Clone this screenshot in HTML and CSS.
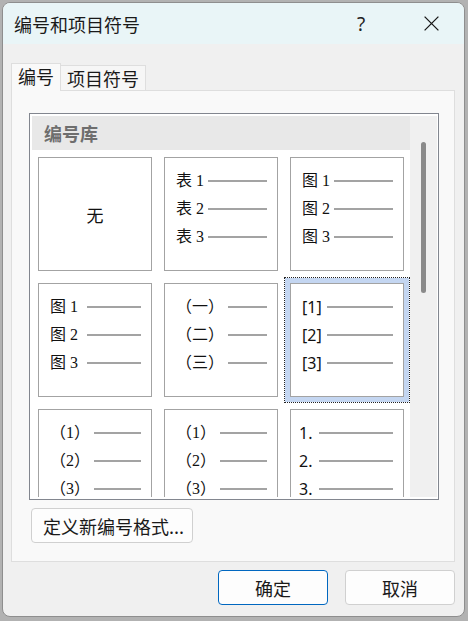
FILE: index.html
```html
<!DOCTYPE html>
<html lang="zh-CN">
<head>
<meta charset="utf-8">
<title>编号和项目符号</title>
<link rel="stylesheet" href="styles.css">
</head>
<body>
<div class="window">
  <div class="titlebar">
    <span class="title">编号和项目符号</span>
    <span class="help">?</span>
    <span class="close">
      <svg width="15" height="15" viewBox="0 0 15 15"><path d="M0.6 0.6 L14.4 14.4 M14.4 0.6 L0.6 14.4" stroke="#1b1b1b" stroke-width="1.3" fill="none"/></svg>
    </span>
  </div>
  <div class="body">
    <div class="tabs">
      <div class="tab active">编号</div>
      <div class="tab">项目符号</div>
    </div>
    <div class="panel">
      <div class="list">
        <div class="main">
          <div class="lib-head">编号库</div>
          <div class="grid">
            <div class="cell none"><span>无</span></div>
            <div class="cell">
              <div class="ln"><span class="t">表 1</span><span class="rule"></span></div>
              <div class="ln"><span class="t">表 2</span><span class="rule"></span></div>
              <div class="ln"><span class="t">表 3</span><span class="rule"></span></div>
            </div>
            <div class="cell">
              <div class="ln"><span class="t">图 1</span><span class="rule"></span></div>
              <div class="ln"><span class="t">图 2</span><span class="rule"></span></div>
              <div class="ln"><span class="t">图 3</span><span class="rule"></span></div>
            </div>
            <div class="cell wide">
              <div class="ln"><span class="t">图 1</span><span class="rule"></span></div>
              <div class="ln"><span class="t">图 2</span><span class="rule"></span></div>
              <div class="ln"><span class="t">图 3</span><span class="rule"></span></div>
            </div>
            <div class="cell">
              <div class="ln"><span class="t">（一）</span><span class="rule"></span></div>
              <div class="ln"><span class="t">（二）</span><span class="rule"></span></div>
              <div class="ln"><span class="t">（三）</span><span class="rule"></span></div>
            </div>
            <div class="cell selected sans">
              <div class="ln"><span class="t">[1]</span><span class="rule"></span></div>
              <div class="ln"><span class="t">[2]</span><span class="rule"></span></div>
              <div class="ln"><span class="t">[3]</span><span class="rule"></span></div>
            </div>
            <div class="cell paren">
              <div class="ln"><span class="t">（1）</span><span class="rule"></span></div>
              <div class="ln"><span class="t">（2）</span><span class="rule"></span></div>
              <div class="ln"><span class="t">（3）</span><span class="rule"></span></div>
            </div>
            <div class="cell paren">
              <div class="ln"><span class="t">（1）</span><span class="rule"></span></div>
              <div class="ln"><span class="t">（2）</span><span class="rule"></span></div>
              <div class="ln"><span class="t">（3）</span><span class="rule"></span></div>
            </div>
            <div class="cell sans dot">
              <div class="ln"><span class="t">1.</span><span class="rule"></span></div>
              <div class="ln"><span class="t">2.</span><span class="rule"></span></div>
              <div class="ln"><span class="t">3.</span><span class="rule"></span></div>
            </div>
          </div>
        </div>
        <div class="track"><div class="thumb"></div></div>
      </div>
      <button class="btn define">定义新编号格式...</button>
    </div>
    <div class="actions">
      <button class="btn primary">确定</button>
      <button class="btn">取消</button>
    </div>
  </div>
</div>
</body>
</html>
```

FILE: styles.css
```css
* { box-sizing: border-box; }

html, body {
  margin: 0;
  padding: 0;
}

body {
  width: 468px;
  height: 621px;
  overflow: hidden;
  background: #b2b2b2;
  font-family: "Noto Sans CJK SC", "Noto Sans", sans-serif;
  color: #1a1a1a;
}

.window {
  margin: 2px 3px 4px 2px;
  height: 615px;
  border: 1px solid #8e8e8e;
  border-radius: 8px;
  overflow: hidden;
  background: #f0f0f0;
  display: flex;
  flex-direction: column;
}

.titlebar {
  height: 41px;
  flex: none;
  background: #e9f5f7;
  display: flex;
  align-items: center;
  padding-left: 11px;
  padding-right: 18px;
}

.title {
  font-size: 18px;
  line-height: 20px;
}

.help {
  margin-left: auto;
  width: 30px;
  text-align: center;
  font-family: "Noto Sans", sans-serif;
  font-size: 19px;
  line-height: 20px;
  color: #222;
}

.close {
  margin-left: 40px;
  width: 30px;
  height: 16px;
  display: flex;
  justify-content: center;
  align-items: center;
}

.body {
  flex: 1;
  padding: 19px 9px 0 8px;
  display: flex;
  flex-direction: column;
}

.tabs {
  height: 27px;
  display: flex;
  align-items: flex-end;
}

.tab {
  height: 25px;
  padding: 0 6px;
  font-size: 18px;
  line-height: 22px;
  background: #f6f6f6;
  border: 1px solid #dedede;
  border-bottom: none;
  border-left: none;
  display: flex;
  align-items: center;
}

.tab.active {
  height: 28px;
  margin-bottom: -1px;
  background: #f9f9f9;
  border-left: 1px solid #dedede;
  position: relative;
  z-index: 1;
  padding-bottom: 3px;
}

.panel {
  height: 472px;
  background: #f9f9f9;
  border: 1px solid #dedede;
  padding: 22px 0 0 17px;
  display: flex;
  flex-direction: column;
  align-items: flex-start;
}

.list {
  width: 410px;
  height: 387px;
  border: 1px solid #82868f;
  background: #fff;
  padding: 2px 1px 2px 2px;
  display: flex;
}

.main {
  width: 378px;
  display: flex;
  flex-direction: column;
}

.lib-head {
  height: 34px;
  flex: none;
  background: #e8e8e8;
  padding-left: 12px;
  font-size: 18px;
  font-weight: 700;
  color: #6e6e6e;
  line-height: 34px;
}

.grid {
  flex: 1;
  overflow: hidden;
  padding: 7px 0 0 6px;
  display: grid;
  grid-template-columns: repeat(3, 114px);
  grid-auto-rows: 114px;
  gap: 12px;
}

.cell {
  border: 1px solid #a3a3a3;
  background: #fff;
  padding: 9px 10px 0 11px;
  display: flex;
  flex-direction: column;
  font-family: "Liberation Serif", "Noto Sans CJK SC", serif;
  font-size: 16px;
  color: #111;
}

.cell.none {
  padding: 0;
  justify-content: center;
  align-items: center;
  font-family: "Noto Sans CJK SC", sans-serif;
  font-size: 17px;
}

.ln {
  height: 28px;
  flex: none;
  display: flex;
  align-items: center;
}

.t {
  white-space: pre;
  line-height: 20px;
}

.rule {
  flex: 1;
  height: 2px;
  margin-left: 4px;
  background: #a3a3a3;
}

.cell.wide .rule { margin-left: 9px; }

.cell.sans {
  font-family: "Noto Sans", "Noto Sans CJK SC", sans-serif;
}

.cell.sans .rule { margin-left: 5px; }

.cell.dot { padding-left: 8px; }
.cell.dot .rule { margin-left: 7px; }

.cell.selected {
  box-shadow: 0 0 0 5px #c4d6f1;
  outline: 1px dotted #222;
  outline-offset: 5px;
}

.track {
  width: 27px;
  background: #f0f0f0;
  padding-top: 26px;
}

.thumb {
  width: 5px;
  height: 151px;
  margin-left: 11px;
  border-radius: 3px;
  background: #8a8a8a;
}

.btn {
  height: 35px;
  width: 110px;
  border: 1px solid #d0d0d0;
  border-radius: 4px;
  background: #fdfdfd;
  font-family: "Noto Sans CJK SC", sans-serif;
  font-size: 18px;
  color: #1a1a1a;
  padding: 0;
  line-height: 20px;
}

.btn.define {
  width: 162px;
  margin: 8px 0 0 2px;
  text-align: left;
  padding-left: 11px;
}

.btn.primary {
  border-color: #0067c0;
}

.actions {
  display: flex;
  justify-content: flex-end;
  gap: 17px;
  margin-top: 8px;
}
```
